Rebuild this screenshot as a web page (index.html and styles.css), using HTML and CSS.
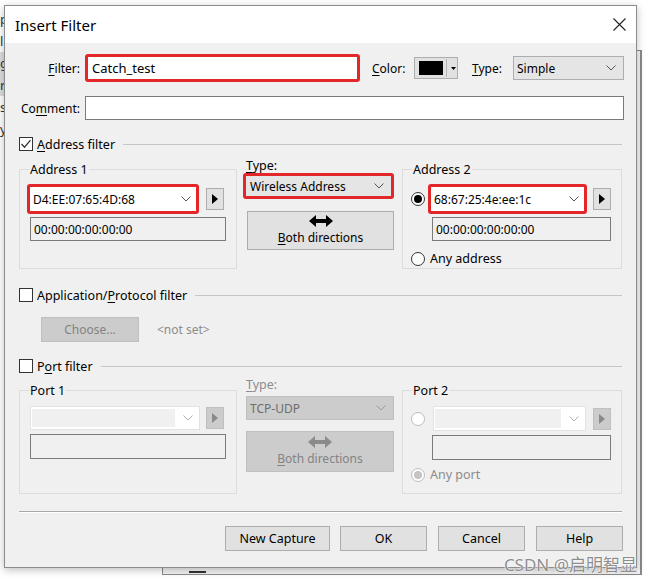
FILE: index.html
```html
<!DOCTYPE html>
<html lang="en">
<head>
    <meta charset="UTF-8">
    <title>Insert Filter</title>
    <link rel="stylesheet" href="styles.css">
</head>
<body>
<div class="desktop">
    <!-- fenetre en arriere-plan -->
    <div class="peek">
        <div>p</div>
        <div>l</div>
        <div class="hl">g</div>
        <div class="hl">rs</div>
        <div>s</div>
        <div>y</div>
    </div>
    <div class="back-win"><span class="back-dash"></span></div>

    <div class="dialog">
        <div class="titlebar">
            <span class="title">Insert Filter</span>
            <svg class="close" width="13" height="13" viewBox="0 0 13 13"><path d="M0.5 0.5L12.5 12.5M12.5 0.5L0.5 12.5" stroke="#222" stroke-width="1.1" fill="none"/></svg>
        </div>

        <div class="body">
            <div class="row-filter">
                <label class="lbl"><u>F</u>ilter:</label>
                <div class="edit filter-edit mark">Catch_test</div>
                <label class="lbl-color"><u>C</u>olor:</label>
                <div class="color-btn">
                    <span class="swatch"></span>
                    <span class="color-sep"></span>
                    <svg width="5" height="3" viewBox="0 0 5 3"><path d="M0 0H5L2.5 3Z" fill="#000"/></svg>
                </div>
                <label class="lbl-type"><u>T</u>ype:</label>
                <div class="select type-select">
                    <span>Simple</span>
                    <svg width="10" height="6" viewBox="0 0 10 6"><path d="M0.5 0.5L5 5L9.5 0.5" stroke="#555" fill="none"/></svg>
                </div>
            </div>

            <div class="row-comment">
                <label class="lbl">Co<u>m</u>ment:</label>
                <div class="edit comment-edit"></div>
            </div>

            <!-- Address filter -->
            <div class="section-head">
                <span class="check checked">
                    <svg width="12" height="12" viewBox="0 0 12 12"><path d="M1.5 6L4.5 9.2L10.5 2.2" stroke="#333" stroke-width="1.3" fill="none"/></svg>
                </span>
                <span class="section-title"><u>A</u>ddress filter</span>
                <span class="section-line"></span>
            </div>

            <div class="pair">
                <fieldset class="group">
                    <legend>Address 1</legend>
                    <div class="combo-row">
                        <div class="combo mark addr1-combo">
                            <span>D4:EE:07:65:4D:68</span>
                            <svg width="10" height="6" viewBox="0 0 10 6"><path d="M0.5 0.5L5 5L9.5 0.5" stroke="#555" fill="none"/></svg>
                        </div>
                        <div class="arrow-btn"><svg width="6" height="10" viewBox="0 0 6 10"><path d="M0 0L6 5L0 10Z" fill="#000"/></svg></div>
                    </div>
                    <div class="mask mask-left">00:00:00:00:00:00</div>
                </fieldset>

                <div class="middle">
                    <div class="mid-label"><u>T</u>ype:</div>
                    <div class="select mark wireless-select">
                        <span>Wireless Address</span>
                        <svg width="10" height="6" viewBox="0 0 10 6"><path d="M0.5 0.5L5 5L9.5 0.5" stroke="#555" fill="none"/></svg>
                    </div>
                    <div class="both-btn">
                        <svg width="24" height="12" viewBox="0 0 24 12"><path d="M0 6L7 0V4H17V0L24 6L17 12V8H7V12Z" fill="#000"/></svg>
                        <span><u>B</u>oth directions</span>
                    </div>
                </div>

                <fieldset class="group group-right">
                    <legend>Address 2</legend>
                    <div class="combo-row">
                        <span class="radio checked"></span>
                        <div class="combo mark addr2-combo">
                            <span>68:67:25:4e:ee:1c</span>
                            <svg width="10" height="6" viewBox="0 0 10 6"><path d="M0.5 0.5L5 5L9.5 0.5" stroke="#555" fill="none"/></svg>
                        </div>
                        <div class="arrow-btn arrow-right"><svg width="6" height="10" viewBox="0 0 6 10"><path d="M0 0L6 5L0 10Z" fill="#000"/></svg></div>
                    </div>
                    <div class="mask mask-right">00:00:00:00:00:00</div>
                    <div class="any-row">
                        <span class="radio"></span>
                        <span>Any address</span>
                    </div>
                </fieldset>
            </div>

            <!-- Application/Protocol filter -->
            <div class="section-head app-head">
                <span class="check"></span>
                <span class="section-title">Application/<u>P</u>rotocol filter</span>
                <span class="section-line"></span>
            </div>
            <div class="choose-row">
                <div class="btn-disabled choose-btn">Choose...</div>
                <span class="not-set">&lt;not set&gt;</span>
            </div>

            <!-- Port filter -->
            <div class="section-head port-head">
                <span class="check"></span>
                <span class="section-title">P<u>o</u>rt filter</span>
                <span class="section-line port-line"></span>
            </div>

            <div class="pair port-pair">
                <fieldset class="group port-group">
                    <legend>Port 1</legend>
                    <div class="combo-row">
                        <div class="combo combo-off port1-combo">
                            <span class="combo-fill"></span>
                            <svg width="10" height="6" viewBox="0 0 10 6"><path d="M0.5 0.5L5 5L9.5 0.5" stroke="#b0b0b0" fill="none"/></svg>
                        </div>
                        <div class="arrow-btn arrow-off"><svg width="6" height="10" viewBox="0 0 6 10"><path d="M0 0L6 5L0 10Z" fill="#8a8a8a"/></svg></div>
                    </div>
                    <div class="mask port-field-left"></div>
                </fieldset>

                <div class="middle port-middle">
                    <div class="mid-label off"><u>T</u>ype:</div>
                    <div class="select select-off">
                        <span>TCP-UDP</span>
                        <svg width="10" height="6" viewBox="0 0 10 6"><path d="M0.5 0.5L5 5L9.5 0.5" stroke="#9a9a9a" fill="none"/></svg>
                    </div>
                    <div class="both-btn both-off">
                        <svg width="24" height="12" viewBox="0 0 24 12"><path d="M0 6L7 0V4H17V0L24 6L17 12V8H7V12Z" fill="#8a8a8a"/></svg>
                        <span><u>B</u>oth directions</span>
                    </div>
                </div>

                <fieldset class="group group-right port-group">
                    <legend>Port 2</legend>
                    <div class="combo-row">
                        <span class="radio radio-off"></span>
                        <div class="combo combo-off port2-combo">
                            <span class="combo-fill"></span>
                            <svg width="10" height="6" viewBox="0 0 10 6"><path d="M0.5 0.5L5 5L9.5 0.5" stroke="#b0b0b0" fill="none"/></svg>
                        </div>
                        <div class="arrow-btn arrow-off arrow-right2"><svg width="6" height="10" viewBox="0 0 6 10"><path d="M0 0L6 5L0 10Z" fill="#8a8a8a"/></svg></div>
                    </div>
                    <div class="mask mask-right port-field-right"></div>
                    <div class="any-row any-port off">
                        <span class="radio radio-off checked"></span>
                        <span>Any port</span>
                    </div>
                </fieldset>
            </div>

            <div class="separator"></div>

            <div class="buttons">
                <div class="btn btn-wide">New Capture</div>
                <div class="btn">OK</div>
                <div class="btn">Cancel</div>
                <div class="btn">Help</div>
            </div>
        </div>
    </div>

    <div class="watermark">CSDN @启明智显</div>
</div>
</body>
</html>
```

FILE: styles.css
```css
body {
    margin: 0;
    background: #fff;
    font-family: 'Noto Sans', 'Noto Sans CJK SC', sans-serif;
    font-size: 12px;
    color: #000;
}

.desktop {
    position: relative;
    width: 651px;
    height: 582px;
    overflow: hidden;
    background: #fff;
}

u {
    text-decoration-thickness: 1px;
    text-underline-offset: 2px;
}

/* fenetres derriere le dialogue */
.peek {
    position: absolute;
    left: 0;
    top: 8px;
    width: 10px;
    font-size: 13px;
    line-height: 22px;
    color: #333;
}

.peek .hl {
    background: #dedede;
}

.back-win {
    position: absolute;
    left: 162px;
    top: 50px;
    width: 477px;
    height: 523px;
    background: #f3f3f3;
    border: 1px solid #8a8a8a;
    border-right: 2px solid #8a8a8a;
}

.back-dash {
    position: absolute;
    left: 26px;
    bottom: 1px;
    width: 17px;
    height: 2px;
    background: #333;
}

/* dialogue */
.dialog {
    position: absolute;
    left: 4px;
    top: 5px;
    width: 633px;
    height: 563px;
    box-sizing: border-box;
    border: 1px solid #8c8c8c;
    background: #f0f0f0;
    box-shadow: 0 2px 8px rgba(0,0,0,0.25);
}

.titlebar {
    height: 37px;
    background: #fff;
    display: flex;
    align-items: center;
    justify-content: space-between;
    padding: 0 10px;
}

.title {
    font-size: 15px;
}

.body {
    padding: 11px 12px 0 14px;
}

.lbl {
    width: 61px;
    margin-right: 5px;
    text-align: right;
    flex-shrink: 0;
}

.row-filter {
    display: flex;
    align-items: center;
    height: 28px;
}

.edit {
    box-sizing: border-box;
    background: #fff;
    border: 1px solid #7a7a7a;
    display: flex;
    align-items: center;
}

.mark {
    border: 3px solid #e3262a !important;
    border-radius: 3px;
}

.filter-edit {
    width: 275px;
    height: 28px;
    padding-left: 4px;
    font-size: 13px;
}

.lbl-color {
    width: 42px;
    margin-left: 12px;
}

.lbl-type {
    width: 41px;
    margin-left: 14px;
}

.color-btn {
    box-sizing: border-box;
    width: 44px;
    height: 22px;
    background: #e1e1e1;
    border: 1px solid #adadad;
    display: flex;
    align-items: center;
    padding-left: 4px;
}

.swatch {
    width: 24px;
    height: 14px;
    background: #000;
}

.color-sep {
    width: 1px;
    height: 18px;
    background: #b5b5b5;
    margin: 0 4px 0 3px;
}

.select {
    box-sizing: border-box;
    background: #e5e5e5;
    border: 1px solid #adadad;
    display: flex;
    align-items: center;
    justify-content: space-between;
    padding: 0 7px 0 3px;
}

.type-select {
    width: 111px;
    height: 24px;
}

.row-comment {
    display: flex;
    align-items: center;
    margin-top: 14px;
    height: 24px;
}

.comment-edit {
    width: 539px;
    height: 24px;
}

/* sections */
.section-head {
    display: flex;
    align-items: center;
    height: 16px;
    margin-top: 16px;
    margin-right: 2px;
}

.check {
    box-sizing: border-box;
    width: 14px;
    height: 14px;
    border: 1px solid #333;
    background: #fff;
    display: flex;
    align-items: center;
    justify-content: center;
}

.section-title {
    margin-left: 4px;
    font-size: 12.5px;
}

.section-line {
    flex: 1;
    margin-left: 8px;
    border-top: 1px solid #c6c6c6;
}

.pair {
    display: flex;
    align-items: flex-start;
    margin-top: 6px;
}

.group {
    box-sizing: border-box;
    margin: 3px 0 0 0;
    width: 218px;
    height: 108px;
    border: 1px solid #dcdcdc;
    padding: 6px 0 0 7px;
    min-width: 0;
}

.group legend {
    padding: 0 1px;
    margin-left: 2px;
    font-size: 12.5px;
    line-height: 17px;
}

.group-right {
    width: 220px;
    margin-left: 8px;
}

.combo-row {
    display: flex;
    align-items: center;
}

.combo {
    box-sizing: border-box;
    background: #fff;
    border: 1px solid #7a7a7a;
    display: flex;
    align-items: center;
    justify-content: space-between;
    padding: 0 5px 0 3px;
}

.addr1-combo {
    width: 172px;
    height: 30px;
}

.addr2-combo {
    width: 159px;
    height: 30px;
    margin-left: 3px;
}

.arrow-btn {
    box-sizing: border-box;
    width: 18px;
    height: 22px;
    margin-left: 7px;
    background: #e1e1e1;
    border: 1px solid #adadad;
    display: flex;
    align-items: center;
    justify-content: center;
}

.arrow-right {
    margin-left: 6px;
}

.mask {
    box-sizing: border-box;
    height: 24px;
    margin-top: 3px;
    border: 1px solid #7a7a7a;
    background: #f0f0f0;
    padding-left: 3px;
    display: flex;
    align-items: center;
}

.mask-left {
    width: 196px;
    margin-left: 3px;
}

.mask-right {
    width: 179px;
    margin-left: 22px;
}

.radio {
    box-sizing: border-box;
    width: 14px;
    height: 14px;
    margin-left: 1px;
    border: 1px solid #333;
    border-radius: 50%;
    background: #fff;
    display: flex;
    align-items: center;
    justify-content: center;
    flex-shrink: 0;
}

.radio.checked::after {
    content: "";
    width: 8px;
    height: 8px;
    border-radius: 50%;
    background: #000;
}

.any-row {
    display: flex;
    align-items: center;
    gap: 5px;
    margin-top: 9px;
    font-size: 12.5px;
}

/* colonne du milieu */
.middle {
    width: 151px;
    margin-left: 6px;
}

.mid-label {
    height: 15px;
    line-height: 15px;
    padding-left: 3px;
    font-size: 12.5px;
}

.wireless-select {
    width: 151px;
    height: 26px;
    margin-top: 0;
    padding-left: 4px;
}

.both-btn {
    box-sizing: border-box;
    width: 147px;
    height: 39px;
    margin: 12px 0 0 4px;
    background: #e1e1e1;
    border: 1px solid #adadad;
    display: flex;
    flex-direction: column;
    align-items: center;
    justify-content: center;
    gap: 2px;
}

/* application */
.app-head {
    margin-top: 18px;
}

.choose-row {
    display: flex;
    align-items: center;
    margin-top: 14px;
}

.btn-disabled {
    box-sizing: border-box;
    background: #cccccc;
    border: 1px solid #bfbfbf;
    color: #838383;
    display: flex;
    align-items: center;
    justify-content: center;
}

.choose-btn {
    width: 98px;
    height: 25px;
    margin-left: 22px;
}

.not-set {
    margin-left: 18px;
    color: #8c8c8c;
}

.port-head {
    margin-top: 16px;
}

/* port */
.port-pair {
    margin-top: 3px;
}

.port-group {
    margin-top: 5px;
    height: 112px;
    padding-top: 7px;
}

.combo-off {
    border: 1px solid #e2e2e2;
    padding: 2px 6px 2px 1px;
}

.combo-fill {
    flex: 1;
    align-self: stretch;
    background: #f0f0f0;
    margin-right: 8px;
}

.port1-combo {
    width: 170px;
    height: 24px;
    margin-left: 3px;
}

.port2-combo {
    width: 153px;
    height: 25px;
    margin-left: 8px;
}

.arrow-off {
    background: #cccccc;
    border-color: #bfbfbf;
    margin-left: 6px;
}

.arrow-right2 {
    margin-left: 7px;
}

.port-field-left {
    width: 196px;
    height: 25px;
    margin: 4px 0 0 3px;
}

.port-field-right {
    height: 25px;
    margin-top: 4px;
}

.off {
    color: #8c8c8c;
}

.select-off {
    width: 148px;
    height: 24px;
    margin: 4px 0 0 3px;
    background: #cccccc;
    border-color: #bfbfbf;
    color: #6d6d6d;
}

.both-off {
    width: 148px;
    height: 41px;
    margin: 11px 0 0 3px;
    background: #cccccc;
    border-color: #bfbfbf;
    color: #838383;
}

.radio-off {
    border-color: #bcbcbc;
}

.radio-off.checked::after {
    background: #c4c4c4;
}

.any-port {
    margin-top: 6px;
}

/* bas du dialogue */
.separator {
    margin: 17px 2px 0 0;
    border-top: 1px solid #a8a8a8;
    border-bottom: 1px solid #fff;
}

.buttons {
    display: flex;
    justify-content: flex-end;
    gap: 11px;
    margin: 13px 1px 0 0;
}

.btn {
    box-sizing: border-box;
    width: 87px;
    height: 25px;
    background: #e1e1e1;
    border: 1px solid #adadad;
    display: flex;
    align-items: center;
    justify-content: center;
    font-size: 12.5px;
}

.btn-wide {
    width: 105px;
    margin-right: -1px;
}

.watermark {
    position: absolute;
    right: 14px;
    bottom: 6px;
    font-size: 17px;
    color: rgba(120,120,120,0.85);
    text-shadow: 0 0 2px #fff, 0 0 1px #fff;
}
```
